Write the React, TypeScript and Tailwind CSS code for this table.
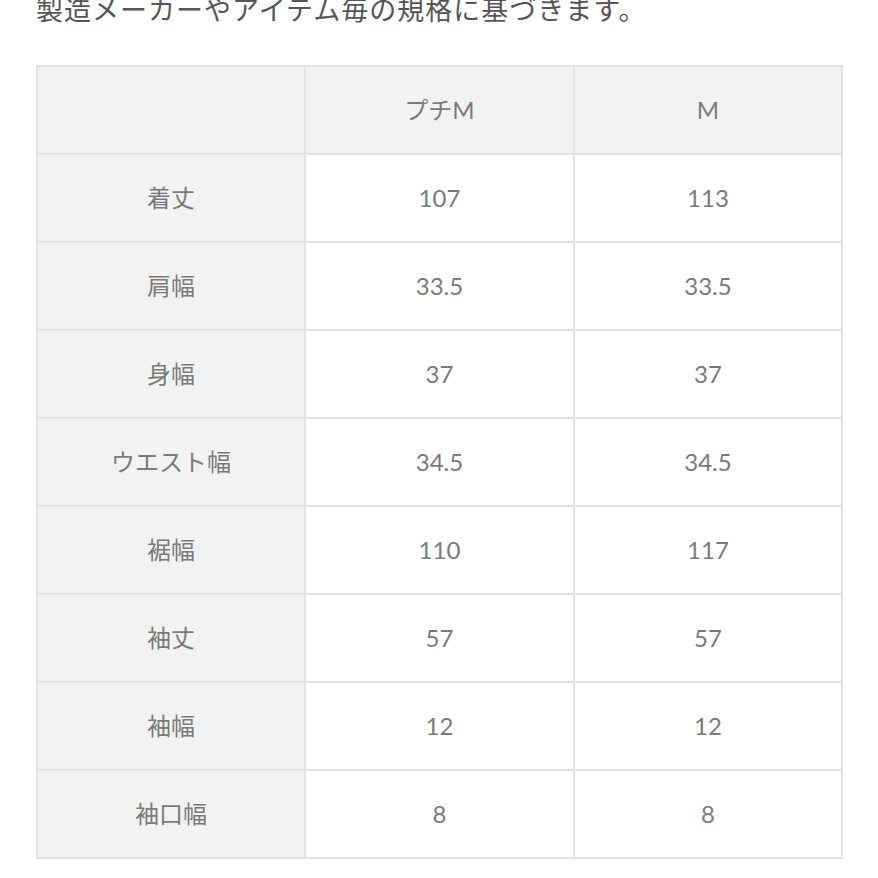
import React from 'react'

const rows: [string, string, string][] = [
  ['着丈', '107', '113'],
  ['肩幅', '33.5', '33.5'],
  ['身幅', '37', '37'],
  ['ウエスト幅', '34.5', '34.5'],
  ['裾幅', '110', '117'],
  ['袖丈', '57', '57'],
  ['袖幅', '12', '12'],
  ['袖口幅', '8', '8'],
]

const font = {
  fontFamily: 'Lato, "Noto Sans CJK JP", sans-serif',
}

export default function App() {
  return (
    <div className="w-[878px] h-[878px] overflow-hidden bg-white" style={font}>
      <div className="pl-[36px] -mt-[10px] text-[27px] leading-[40px] text-[#555] tracking-[1px]">
        製造メーカーやアイテム毎の規格に基づきます。
      </div>
      <div className="pl-[36px] pt-[35px]">
        <table className="border-collapse w-[805px] table-fixed text-[24px] text-[#7a7a7a]">
          <thead>
            <tr className="h-[88px]">
              <th className="w-[268px] border-2 border-[#e2e2e2] bg-[#f2f2f2] font-normal"></th>
              <th className="w-[269px] border-2 border-[#e2e2e2] bg-[#f2f2f2] font-normal">プチM</th>
              <th className="w-[268px] border-2 border-[#e2e2e2] bg-[#f2f2f2] font-normal">M</th>
            </tr>
          </thead>
          <tbody>
            {rows.map(r => (
              <tr key={r[0]} className="h-[88px]">
                <td className="border-2 border-[#e2e2e2] bg-[#f2f2f2] text-center">{r[0]}</td>
                <td className="border-2 border-[#e2e2e2] bg-white text-center">{r[1]}</td>
                <td className="border-2 border-[#e2e2e2] bg-white text-center">{r[2]}</td>
              </tr>
            ))}
          </tbody>
        </table>
      </div>
    </div>
  )
}
